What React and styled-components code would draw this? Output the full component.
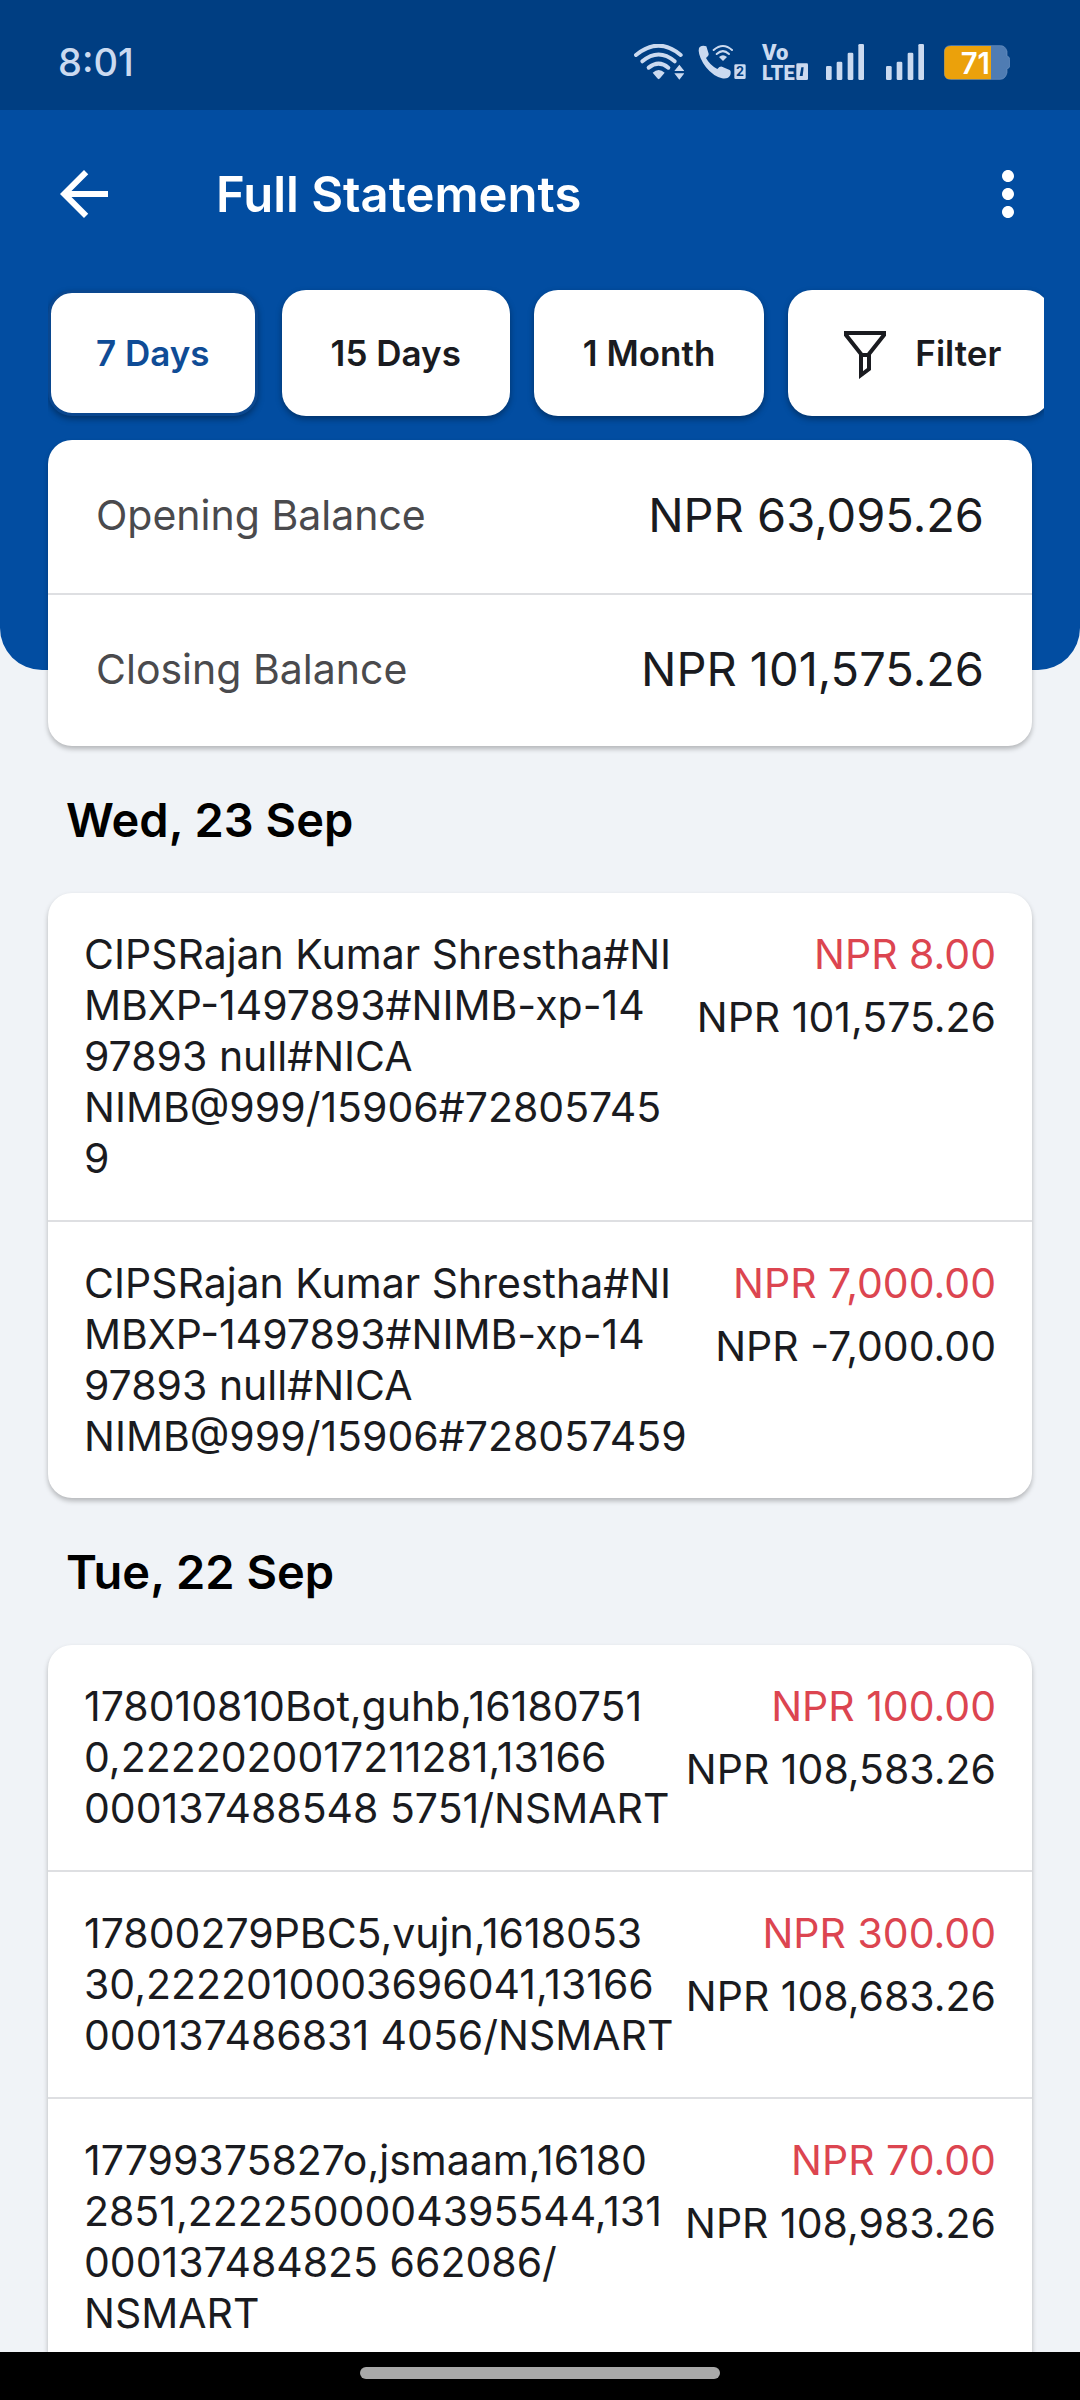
import React, { useState } from 'react';
import styled, { createGlobalStyle } from 'styled-components';
import { MdArrowBack, MdMoreVert } from 'react-icons/md';

const FILTERS = ['7 Days', '15 Days', '1 Month'];

const STATEMENTS = [
  {
    date: 'Wed, 23 Sep',
    items: [
      {
        text:
          'CIPSRajan Kumar Shrestha#NI\nMBXP-1497893#NIMB-xp-14\n97893 null#NICA\nNIMB@999/15906#72805745\n9',
        amount: 'NPR 8.00',
        balance: 'NPR 101,575.26',
      },
      {
        text:
          'CIPSRajan Kumar Shrestha#NI\nMBXP-1497893#NIMB-xp-14\n97893 null#NICA\nNIMB@999/15906#728057459',
        amount: 'NPR 7,000.00',
        balance: 'NPR -7,000.00',
      },
    ],
  },
  {
    date: 'Tue, 22 Sep',
    items: [
      {
        text:
          '178010810Bot,guhb,16180751\n0,2222020017211281,13166\n000137488548 5751/NSMART',
        amount: 'NPR 100.00',
        balance: 'NPR 108,583.26',
      },
      {
        text:
          '17800279PBC5,vujn,1618053\n30,2222010003696041,13166\n000137486831 4056/NSMART',
        amount: 'NPR 300.00',
        balance: 'NPR 108,683.26',
      },
      {
        text:
          '17799375827o,jsmaam,16180\n2851,2222500004395544,131\n000137484825 662086/\nNSMART',
        amount: 'NPR 70.00',
        balance: 'NPR 108,983.26',
      },
    ],
  },
];

const WifiIcon = () => (
  <svg width="50" height="36" viewBox="0 0 150 108" fill="none">
    <g stroke="currentColor" strokeWidth="12" strokeLinecap="round">
      <path d="M6 33 Q74 -23 140 33" />
      <path d="M25 52 Q74 11 122 52" />
      <path d="M44 71 Q74 47 103 71" />
    </g>
    <path
      d="M56 86 Q74 70 92 86 L78 103 Q74 108 70 103 Z"
      fill="currentColor"
    />
    <path d="M136 62 L151 81 H121 Z M136 107 L151 88 H121 Z" fill="currentColor" />
  </svg>
);

const WifiCallIcon = () => (
  <svg width="48" height="36" viewBox="0 0 144 108" fill="none">
    <path
      d="M5 9 Q14 3 25 7 L32 29 Q33 34 24 42 Q36 64 58 75 Q66 66 72 68 L95 78 Q100 81 97 93 Q91 106 72 103 Q46 97 24 70 Q3 41 2 20 Q2 12 5 9 Z"
      fill="currentColor"
    />
    <g stroke="currentColor" strokeWidth="6" strokeLinecap="round">
      <path d="M47 18 Q75 -6 102 18" />
      <path d="M56 30 Q75 13 93 30" />
    </g>
    <path d="M63 39 Q75 28 87 39 L75 51 Z" fill="currentColor" />
    <rect x="109" y="61" width="34" height="44" rx="4" fill="currentColor" />
    <text
      x="126"
      y="97"
      fontSize="38"
      fontWeight="700"
      textAnchor="middle"
      fill="#003e82"
    >
      2
    </text>
  </svg>
);

const VolteIcon = () => (
  <svg width="50" height="36" viewBox="-6 0 150 108" fill="currentColor" overflow="visible">
    <g fontFamily="Roboto, sans-serif" fontWeight="900">
      <text x="0" y="47" fontSize="66">
        Vo
      </text>
      <text x="0" y="108" fontSize="60">
        LTE
      </text>
    </g>
    <rect x="103" y="58" width="35" height="50" rx="4" />
    <path d="M118 70 h7 l-3 26 h-9 Z" fill="#003e82" />
  </svg>
);

const SignalIcon = () => (
  <svg width="46" height="36" viewBox="-6 0 138 108" fill="currentColor">
    <rect x="0" y="66" width="17" height="42" rx="4" />
    <rect x="32" y="53" width="17" height="55" rx="4" />
    <rect x="65" y="26" width="17" height="82" rx="4" />
    <rect x="97" y="0" width="17" height="108" rx="4" />
  </svg>
);

const BatteryIcon = () => (
  <svg width="66" height="36" viewBox="0 0 198 108">
    <path
      d="M20 5 H170 Q184 5 189 22 V36 Q197 38 197 46 V66 Q197 73 189 74 V86 Q184 106 168 106 H20 Q1 106 1 86 V25 Q1 5 20 5 Z"
      fill="#4f7cb3"
      stroke="#6f95c4"
      strokeWidth="2"
    />
    <path d="M20 6 H141 V106 H20 Q1 106 1 86 V25 Q1 6 20 6 Z" fill="#eba10b" />
    <text
      x="94"
      y="91"
      fontSize="88"
      fontWeight="600"
      textAnchor="middle"
      fill="#fff"
    >
      71
    </text>
  </svg>
);

const FilterIcon = () => (
  <svg
    width="54"
    height="54"
    viewBox="0 0 54 54"
    fill="none"
    stroke="currentColor"
    strokeWidth="4"
  >
    <path d="M9 7 H47 V9 L32 28 V43 L24 49 V28 L9 9 Z" />
    <path d="M24 29 H32" />
  </svg>
);

const Transaction = ({ text, amount, balance }) => (
  <TransactionRow>
    <Description>{text}</Description>
    <Amounts>
      <Amount $debit>{amount}</Amount>
      <Amount>{balance}</Amount>
    </Amounts>
  </TransactionRow>
);

const App = () => {
  const [active, setActive] = useState('7 Days');

  return (
    <Screen>
      <GlobalStyle />
      <StatusBar>
        <Clock>8:01</Clock>
        <StatusIcons>
          <WifiIcon />
          <WifiCallIcon />
          <VolteIcon />
          <SignalIcon />
          <SignalIcon />
          <BatteryIcon />
        </StatusIcons>
      </StatusBar>
      <Content>
        <Header>
          <AppBar>
            <IconButton aria-label="Back">
              <MdArrowBack />
            </IconButton>
            <Title>Full Statements</Title>
            <IconButton aria-label="More options">
              <MdMoreVert />
            </IconButton>
          </AppBar>
          <Chips>
            {FILTERS.map(name => (
              <Chip
                key={name}
                $active={name === active}
                onClick={() => setActive(name)}
              >
                {name}
              </Chip>
            ))}
            <Chip>
              <FilterIcon />
              Filter
            </Chip>
          </Chips>
        </Header>
        <BalanceCard>
          <BalanceRow>
            <BalanceLabel>Opening Balance</BalanceLabel>
            <BalanceValue>NPR 63,095.26</BalanceValue>
          </BalanceRow>
          <BalanceRow>
            <BalanceLabel>Closing Balance</BalanceLabel>
            <BalanceValue>NPR 101,575.26</BalanceValue>
          </BalanceRow>
        </BalanceCard>
        {STATEMENTS.map(({ date, items }) => (
          <section key={date}>
            <DateHeading>{date}</DateHeading>
            <Card>
              {items.map((item, index) => (
                <Transaction {...item} key={index} />
              ))}
            </Card>
          </section>
        ))}
      </Content>
      <NavBar>
        <NavHandle />
      </NavBar>
    </Screen>
  );
};

export default App;

const GlobalStyle = createGlobalStyle`
  * {
    box-sizing: border-box;
  }

  body {
    margin: 0;
    background: #f0f3f7;
    color: #1a1b20;
    font-family: Inter, 'Liberation Sans', sans-serif;
  }

  button {
    font-family: inherit;
  }
`;

const Screen = styled.div`
  display: flex;
  flex-direction: column;
  height: 100vh;
`;

const StatusBar = styled.div`
  display: flex;
  flex: none;
  align-items: center;
  justify-content: space-between;
  height: 110px;
  padding: 14px 70px 0 58px;
  background: #003e82;
  color: #cbdaf0;
`;

const Clock = styled.span`
  font-size: 38px;
  font-weight: 500;
`;

const StatusIcons = styled.div`
  display: flex;
  align-items: center;
  gap: 14px;
`;

const Content = styled.main`
  flex: 1;
  min-height: 0;
  overflow: hidden;
`;

const Header = styled.header`
  padding-bottom: 242px;
  border-radius: 0 0 42px 42px;
  background: #024da1;
`;

const AppBar = styled.div`
  display: flex;
  align-items: center;
  height: 168px;
  padding: 0 36px 0 48px;
`;

const IconButton = styled.button`
  display: flex;
  padding: 0;
  border: none;
  background: none;
  color: #fff;
  font-size: 72px;
`;

const Title = styled.h1`
  flex: 1;
  margin: 0 0 0 96px;
  color: #fff;
  font-size: 49px;
  font-weight: 600;
`;

const Chips = styled.div`
  display: flex;
  gap: 24px;
  margin: 0 36px 0 48px;
  padding: 12px 0;
  overflow: hidden;
`;

const Chip = styled.button`
  display: flex;
  flex: none;
  align-items: center;
  gap: 24px;
  height: 126px;
  padding: 0 ${props => (props.$active ? 45 : 49)}px;
  border: ${props => (props.$active ? '3px solid #0a478f' : 'none')};
  border-radius: 24px;
  background: #fff;
  box-shadow: 0 3px 6px rgba(0, 0, 0, 0.35);
  color: ${props => (props.$active ? '#0f4c96' : '#1a1b20')};
  font-size: 35px;
  font-weight: 600;
`;

const Card = styled.div`
  margin: 0 48px;
  border-radius: 24px;
  background: #fff;
  box-shadow: 0 3px 5px rgba(0, 0, 0, 0.25);
`;

const BalanceCard = styled(Card)`
  position: relative;
  margin-top: -230px;
`;

const BalanceRow = styled.div`
  display: flex;
  align-items: center;
  justify-content: space-between;
  height: 153px;
  padding: 0 48px 4px;

  & + & {
    border-top: 2px solid #dedfe2;
  }
`;

const BalanceLabel = styled.span`
  color: #4a4a4d;
  font-size: 41px;
`;

const BalanceValue = styled.span`
  font-size: 47px;
`;

const DateHeading = styled.h2`
  margin: 0;
  padding: 0 66px;
  color: #000;
  font-size: 47px;
  font-weight: 600;
  line-height: 147px;
`;

const TransactionRow = styled.div`
  display: flex;
  justify-content: space-between;
  padding: 36px;
  font-size: 41px;
  line-height: 51px;

  & + & {
    border-top: 2px solid #dedfe2;
  }
`;

const Description = styled.div`
  white-space: pre;
`;

const Amounts = styled.div`
  display: flex;
  flex-direction: column;
  gap: 12px;
  text-align: right;
  white-space: nowrap;
`;

const Amount = styled.span`
  color: ${props => (props.$debit ? '#dc4550' : 'inherit')};
`;

const NavBar = styled.div`
  display: flex;
  flex: none;
  align-items: center;
  justify-content: center;
  height: 48px;
  padding-bottom: 6px;
  background: #000;
`;

const NavHandle = styled.div`
  width: 33.3333%;
  height: 12px;
  border-radius: 6px;
  background: #a9a9a9;
`;
